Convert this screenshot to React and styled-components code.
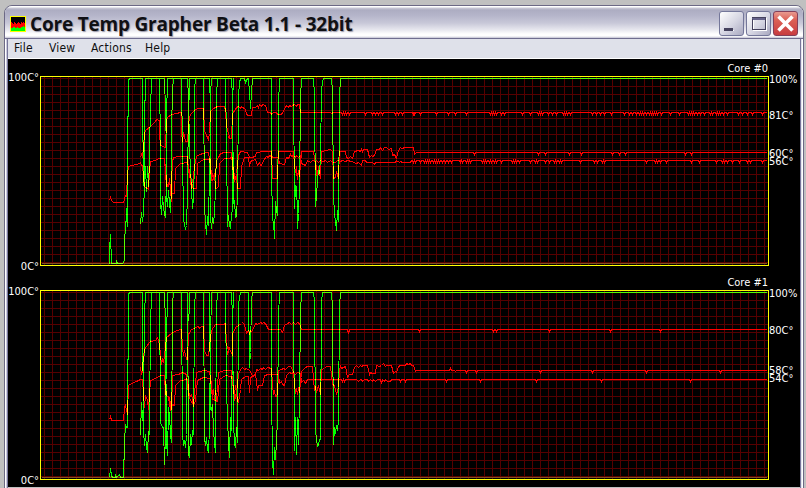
import React from 'react';
import styled, { createGlobalStyle } from 'styled-components';

const PLOT_WIDTH = 729;
const PLOT_HEIGHT = 190;

// Traces are stored in blocks of thirds of a pixel: [block offset, 'x,y x,y ...']
const toPath = (blocks) => {
	const points = blocks.flatMap(([offset, samples]) =>
		samples
			.trim()
			.split(/\s+/)
			.map((pair) => {
				const [x, y] = pair.split(',').map(Number);
				return `${60.5 + Math.floor((x + offset) / 3)} ${Math.floor(y / 3) - 5.5}`;
			})
	);
	return `M${points.join('L')}`;
};

// A steady reading at `level` with one-sample spikes
const steady = (level, from, to, dips, size = 6) => {
	const spikes = dips.map(
		(x) => `${x - 3},${level} ${x},${level + size} ${x + 3},${level}`
	);
	return `${from},${level} ${spikes.join(' ')} ${to},${level}`;
};

const CORES = [
	{
		name: 'Core #0',
		temps: [
			{ label: '81C°', at: 40 },
			{ label: '60C°', at: 78 },
			{ label: '56C°', at: 86 },
		],
		load: [
			[
				[0, '28,579 28,538 31,492 34,579 48,579 49,570 52,579 66,579 73,570 74,492 77,490 78,415 80,440 82,470 83,252 85,30 88,25 127,25 128,75 130,345 133,320 136,290 139,365 142,288 145,350 148,270 151,75 154,68 154,25 193,25 195,120 198,240 200,380 203,410 205,362 208,400 211,428 214,350 215,180 217,60 219,25 262,25 264,80 267,240 271,290 274,355 277,415 280,385 282,270 284,60 287,25 328,25 330,110 332,440 334,475 337,443 340,460 343,430 346,355 348,240 350,80 353,25'],
				[360, '34,25 38,80 40,400 43,390 46,443 49,440 52,375 54,80 57,38 60,25 72,25 75,38 78,30 81,25 84,25 87,70 89,62 91,115 93,65 96,25 153,25 155,300 157,450 160,455 163,505 166,395 169,420 172,435 175,110 178,25 220,25 222,415 226,345 228,350 231,430 233,475 236,430 238,350 242,85 244,25 280,25 283,75 286,410 289,375 292,330 296,300 298,310 301,260 303,60 307,35 310,25 334,25 338,60 341,380 344,430 347,455 349,480 352,420 355,455 358,80 361,25'],
				[1080, '0,25 918,25'],
			],
			[
				[0, '121,462 124,428 127,455 130,430 132,340 133,95 136,88 136,25 178,25 180,230 181,400 184,432 187,380 190,410 193,432 196,443 198,320 200,110 203,60 203,25 244,25 246,240 250,445 253,465 256,475 260,465 262,370 265,100 268,80 268,25 310,25 313,410 316,460 319,493 322,440 325,465 328,300 330,230 332,70 334,25 376,25 378,220 382,470'],
				[360, '25,435 28,465 31,475 34,430 37,420 38,100 40,25'],
			],
		],
		heat: [
			[
				[0, '121,262 124,253 127,262 131,230 133,190 137,182 150,168 165,153 170,148 177,150 179,190 182,226 190,228 193,232 196,232 198,150 203,142 215,133 230,130 240,127 243,127 245,185 247,213 250,187 253,195 257,213 262,214 265,170 268,138 275,130 285,118 295,114 310,116 313,180 318,195 325,208 329,190 332,125 340,116 352,109 372,109 377,120 380,170 384,190 388,200'],
				[360, '25,200 27,205 33,205 38,130 45,118 50,112 55,108 60,115 65,108 75,118 78,133 85,135 94,135 98,112 105,112 111,106 114,111 118,103 124,108 128,103 135,105 142,128 150,128 155,133 160,128 168,128 172,133 185,133 195,112 200,107 204,112 209,106 213,110 218,106 222,103 228,109 233,103 238,104 242,127 330,127 334,131 340,127'],
				[720, steady(127, 0, 360, [6, 14, 19, 29, 77, 97, 105, 114, 126, 165, 175, 187, 219, 224, 240, 290, 325, 345])],
				[1080, steady(127, 0, 918, [18, 90, 97, 103, 109, 124, 132, 188, 212, 235, 241, 248, 264, 277, 290, 310, 317, 323, 330, 398, 408, 421, 434, 455, 492, 508, 516, 530, 537, 543, 550, 560, 567, 573, 579, 585, 592, 605, 630, 658, 685, 692, 698, 704, 712, 722, 732, 752, 758, 768, 775, 782, 790, 802, 835, 848, 862, 876, 907])],
			],
			[
				[0, '193,265 198,350 206,345 209,325 213,395 215,330 217,275 219,262 235,258 250,258 262,260 266,300 270,330 274,355 278,340 282,290 288,260 298,252 310,250 318,247 326,248 330,290 334,330 337,310 340,328 345,318 348,270 355,262 360,250 372,247 388,247'],
				[360, '28,247 35,247 38,270 41,325 44,310 47,328 50,310 54,255 62,245 83,247 88,262 95,262 105,260 110,247 130,243 153,243 157,325 172,325 176,245 220,243 224,290 228,315 230,290 232,328 235,300 238,320 243,245 280,243 285,280 288,316 290,285 293,312 296,290 301,325 304,245 332,238 336,245 340,325 346,322 350,305 355,325 357,245 360,244'],
				[720, '0,244 16,244 20,262 25,265 30,260 37,265 42,245 55,240 60,243 64,238 68,243 71,238 83,238 88,262 95,255 98,259 104,255 110,238 118,238 122,232 128,240 133,233 140,233 146,237 153,234 158,255 162,252 168,264 170,262 174,240 180,233 185,236 195,232 220,232 224,252 230,247'],
				[1080, steady(247, 0, 918, [42, 235, 255, 327, 363, 458, 478, 495, 675, 693])],
			],
			[
				[0, '28,392 31,382 34,392 40,397 70,397 75,377 80,378 83,310 85,290 95,285 112,282 120,278 124,285 128,285 130,320 134,350 145,358 149,300 152,275 165,270 176,265 193,265 198,330 202,350 206,350 209,325 212,360 214,370 222,370 225,295 240,280 262,278 268,300 273,345 280,355 289,355 292,280 310,268 330,268 333,330 337,330 342,310 346,355 354,353 358,280 372,265 390,265'],
				[360, '35,260 40,300 44,330 50,320 53,355 60,355 64,290 72,262 85,262 88,290 92,275 98,270 105,268 112,285 118,278 121,287 125,285 130,270 140,258 145,262 149,256 153,258 160,262 175,262 178,280 192,282 200,262 206,266 210,253 215,260 220,255 225,261 230,256 235,261 240,257 244,280 257,285 262,272 270,278 278,270 285,275 290,270 295,277 300,272 310,275 316,270 323,277 330,270 338,276 345,278 353,270 360,275'],
				[720, '0,275 6,272 16,275 22,272 35,275 50,280 55,278 60,284 64,286 66,272 70,272 76,272 80,277 98,277 102,282 105,277 165,277 170,272 177,277 182,273 186,277 212,277'],
				[720, steady(271, 215, 360, [219, 225, 240, 252, 258, 264, 270, 281, 287, 293, 299, 306, 315, 326, 334])],
				[1080, steady(271, 0, 918, [2, 7, 20, 26, 32, 66, 72, 80, 88, 94, 102, 110, 125, 157, 163, 170, 177, 210, 225, 233, 256, 267, 282, 290, 297, 305, 360, 402, 412, 427, 433, 560, 585, 592, 600, 620, 695, 717, 770, 787, 793, 802, 817, 837, 862, 870, 907])],
			],
		],
	},
	{
		name: 'Core #1',
		temps: [
			{ label: '80C°', at: 41 },
			{ label: '58C°', at: 81 },
			{ label: '54C°', at: 89 },
		],
		load: [
			[
				[0, '28,579 31,553 34,575 37,579 45,579 47,570 50,579 57,570 60,579 70,579 73,475 76,420 79,430 82,430 82,225 85,225 85,30 88,25 127,25 128,75 130,440 133,485 136,450 139,490 142,505 145,445 148,450 150,80 154,70 154,25 193,25 195,115 198,475 201,515 204,370 207,395 211,450 214,475 216,60 219,25 262,25 265,510 267,520 270,450 274,480 277,440 280,450 283,65 287,25 328,25 331,375 334,380 337,360 340,440 343,475 346,505 349,70 353,25'],
				[360, '34,25 38,100 40,410 43,480 46,488 49,430 52,475 55,60 60,25 84,25 87,250 89,245 91,205 94,50 96,25 153,25 155,310 157,530 160,572 163,490 166,525 169,470 172,410 175,100 178,25 220,25 223,500 226,400 230,510 233,400 236,480 239,330 242,85 244,25 280,25 283,50 286,440 289,465 292,488 295,485 298,465 301,465 303,55 308,25 334,25 338,70 341,480 344,430 347,448 350,425 353,440 355,410 358,65 361,25'],
				[1080, '0,25 918,25'],
			],
			[
				[0, '121,452 124,355 127,410 130,350 133,90 136,25 178,25 180,390 182,415 187,430 190,430 193,540 196,450 199,130 203,70 203,25 244,25 247,450 250,485 253,470 257,490 260,450 262,120 268,80 268,25 310,25 313,460 316,485 319,460 322,495 325,505 328,430 331,170 334,25 376,25 379,320 385,480 388,520'],
				[360, '28,520 31,400 34,440 37,120 40,25'],
			],
		],
		heat: [
			[
				[0, '121,250 125,270 128,260 131,210 137,190 150,172 165,168 173,160 178,180 181,215 184,240 187,225 190,235 193,215 197,190 200,160 215,148 230,138 243,136 247,190 250,215 253,198 258,225 262,225 265,150 275,135 295,128 299,132 303,127 310,128 313,200 318,213 326,213 330,160 335,140 345,122 370,120 376,117 380,180 384,200 388,190'],
				[360, '22,210 26,190 30,200 36,215 38,150 45,130 55,124 65,119 68,115 73,122 78,147 84,140 87,148 90,140 95,142 100,132 107,118 113,121 120,115 127,119 131,115 135,119 144,136 182,136 188,145 194,125 203,118 208,115 213,121 220,116 226,121 231,116 238,118 243,136 360,136'],
				[720, '0,136 22,136 25,148 29,136 235,136 238,142 240,136 360,136'],
				[1080, steady(136, 0, 918, [100, 108, 267, 450, 600])],
			],
			[
				[0, '193,275 198,335 208,340 214,375 217,275 235,272 248,265 258,270 265,330 270,350 280,360 288,265 310,260 327,262 333,300 336,330 339,315 342,345 345,320 350,345 356,265 372,260 390,260'],
				[360, '35,260 39,320 42,330 45,305 48,325 54,270 62,255 68,251 74,256 80,252 87,260 98,275 105,270 108,255 114,258 120,253 126,257 130,250 135,256 142,251 153,253 156,300 159,330 162,322 165,337 172,335 176,260 184,257 190,252 197,256 204,248 212,247 220,262 224,300 227,328 230,312 232,330 235,310 238,325 243,262 250,257 256,250 262,248 278,248 284,320 287,310 290,325 294,305 301,330 304,255 312,253 318,247 332,247 338,300 344,305 350,330 356,310 358,255 360,248'],
				[720, '0,248 5,252 16,247 22,280 28,270 36,270 42,250 50,245 55,250 60,244 65,248 70,244 83,244 88,272 92,264 98,268 106,268 110,245 118,246 125,244 130,238 135,246 139,243 153,244 156,255 160,268 165,262 170,265 174,247 180,244 195,244 200,238 205,241 210,238 214,244 220,244 225,262 230,259 328,259 331,253 334,259 342,259 345,263 348,259 360,259'],
				[1080, steady(259, 0, 918, [18, 50, 240, 398, 560, 780])],
			],
			[
				[0, '28,405 31,397 34,410 70,410 74,370 77,365 82,390 85,305 95,298 110,292 122,287 128,287 132,370 136,335 142,350 146,375 150,290 165,283 180,275 193,275 197,330 206,340 212,375 216,360 223,365 227,305 240,290 262,287 267,340 275,330 280,365 286,350 292,290 310,280 330,283 336,345 345,350 352,352 357,285 375,275 390,277'],
				[360, '35,275 40,310 44,348 48,325 52,352 56,355 60,315 65,285 75,278 85,278 88,325 92,280 98,277 105,275 108,288 112,318 116,303 126,303 133,275 145,270 175,270 178,298 183,292 188,302 194,303 200,275 207,265 215,269 220,265 226,271 233,265 240,268 244,295 250,290 257,297 262,286 360,287'],
				[720, '0,287 4,287 7,292 10,287 14,292 17,287 50,287 54,292 60,287 65,287 68,292 72,287 82,287 86,293 90,287 96,293 100,287 106,292 111,287 120,287 123,298 128,287 132,292 135,287 142,292 150,292 155,287 177,287 180,292 184,287 192,287 195,292 200,287 315,287 318,292 321,287'],
				[1080, steady(286, 0, 918, [62, 228, 425, 690])],
			],
		],
	},
];

const GlobalStyle = createGlobalStyle`
	body {
		margin: 0;
		overflow: hidden;
		background: #c0c0c0;
	}
`;

const Desktop = styled.div`
	box-sizing: border-box;
	width: 806px;
	height: 488px;
	padding: 5px 2px 0 4px;
	overflow: hidden;
	background: #c0c0c0;
	font-family: 'DejaVu Sans Condensed', 'DejaVu Sans', sans-serif;
	font-stretch: condensed;
	font-size: 11px;
`;

const Window = styled.div`
	box-sizing: border-box;
	height: 500px;
	padding: 0 3px;
	border: 1px solid #6c6985;
	border-radius: 8px 8px 0 0;
	background: linear-gradient(90deg, #fff 1px, #c9c9dc 1px, #c9c9dc 2px, #77769a 2px, #77769a 3px, transparent 3px, transparent 795px, #77769a 795px, #77769a 796px, #c9c9dc 796px, #fff 797px);
	overflow: hidden;
`;

const TitleBar = styled.div`
	display: flex;
	align-items: center;
	box-sizing: border-box;
	height: 33px;
	margin: 0 -3px;
	padding: 0 5px;
	border-bottom: 1px solid #706e90;
	background: linear-gradient(
		#fff 0,
		#fff 1px,
		#c8c8d6 2px,
		#adadc2 4px,
		#b4b4c9 9px,
		#c8c8d8 17px,
		#e8e8ef 24px,
		#fff 28px,
		#fff 30px,
		#c0c0d2 32px
	);
`;

const Title = styled.h1`
	flex: 1;
	margin: 4px 0 0 4px;
	color: #101014;
	font-family: 'Open Sans', 'Noto Sans', sans-serif;
	font-stretch: normal;
	font-size: 19px;
	font-weight: 700;
	line-height: 24px;
	letter-spacing: -0.2px;
	white-space: nowrap;
	text-shadow: 1px 1px 1px #9898aa;
`;

const Buttons = styled.div`
	display: flex;
	gap: 2px;
	margin-top: 2px;
`;

const WindowButton = styled.button`
	box-sizing: border-box;
	width: 25px;
	height: 25px;
	padding: 0;
	border: 1px solid ${(props) => (props.$close ? '#84405a' : '#74779a')};
	border-radius: 3px;
	background: ${(props) =>
		props.$close
			? 'linear-gradient(#e89a90, #dc6055 35%, #c83c40)'
			: 'linear-gradient(135deg, #fff, #d5d5e2 55%, #a9a9c0)'};

	svg {
		display: block;
	}
`;

const MenuBar = styled.nav`
	display: flex;
	gap: 14px;
	box-sizing: border-box;
	height: 20px;
	padding: 0 6px;
	border-bottom: 1px solid #fff;
	background: #dfe1ea;
	color: #101010;
	font-size: 12px;
	letter-spacing: 0.2px;
	line-height: 19px;
`;

const MenuItem = styled.span`
	width: ${(props) => props.$width}px;
	white-space: nowrap;
`;

const Client = styled.main`
	background: #000;
	color: #fff;
`;

const CorePanel = styled.section`
	display: grid;
	grid-template-columns: 32px ${PLOT_WIDTH}px 1fr;
	grid-template-rows: 17px ${PLOT_HEIGHT}px;
	height: 214px;
`;

const CoreName = styled.h2`
	grid-column: 2;
	margin: 0;
	padding: 3px 1px 0 0;
	font-size: 11px;
	font-weight: 400;
	line-height: 13px;
	text-align: right;
`;

const Axis = styled.div`
	grid-column: 1;
	display: flex;
	flex-direction: column;
	justify-content: space-between;
	align-items: flex-end;
	margin: -5px 1px -8px 0;
	line-height: 14px;
	white-space: nowrap;
`;

const Readings = styled.div`
	position: relative;
	line-height: 14px;
	white-space: nowrap;
`;

const Reading = styled.span`
	position: absolute;
	left: 0;
	top: ${(props) => props.$at - 7}px;
`;

const Plot = styled.svg`
	display: block;
	isolation: isolate;
	shape-rendering: crispEdges;
	fill: none;
`;

// Load is added on top of the heat traces, so crossings turn yellow
const Trace = styled.path`
	stroke: ${(props) => (props.$load ? '#00ff00' : '#ff0000')};
	mix-blend-mode: ${(props) => (props.$load ? 'lighten' : 'normal')};
`;

const Icon = styled.svg`
	flex: none;
	margin-top: 3px;
	shape-rendering: crispEdges;
`;

function AppIcon() {
	return (
		<Icon width="16" height="16">
			<path fill="#ffff00" d="M0 0h16v16H0z" />
			<path fill="#000" d="M1 1h14v14H1z" />
			<path fill="#ff0000" d="M1 6h1v1h1v1h1V6h1v1h1v1h1V7h1V6h1v1h1v1h1V6h1v1h1V6h1v1h1v5H1z" />
			<path fill="#00ff00" d="M1 12h2v-1h2v1h2v-1h1v1h3v-1h2v-1h1v1h1v4H1z" />
		</Icon>
	);
}

function Grid() {
	let d = '';
	for (let x = 4; x < PLOT_WIDTH - 1; x += 8) d += `M${x + 0.5} 1V189`;
	for (let y = 2; y < PLOT_HEIGHT - 1; y += 8) d += `M1 ${y + 0.5}H728`;
	return <path d={d} stroke="#560000" />;
}

function Core({ core }) {
	return (
		<CorePanel>
			<CoreName>{core.name}</CoreName>
			<Axis>
				<span>100C°</span>
				<span>0C°</span>
			</Axis>
			<Plot width={PLOT_WIDTH} height={PLOT_HEIGHT}>
				<Grid />
				<path d="M2 187.5H727" stroke="#805020" />
				{core.heat.map((trace, i) => (
					<Trace key={i} d={toPath(trace)} />
				))}
				{core.load.map((trace, i) => (
					<Trace key={i} $load d={toPath(trace)} />
				))}
				<rect x="0.5" y="0.5" width="728" height="189" stroke="#ffff00" />
			</Plot>
			<Readings>
				<Reading $at={4}>100%</Reading>
				{core.temps.map((temp) => (
					<Reading key={temp.label} $at={temp.at}>
						{temp.label}
					</Reading>
				))}
			</Readings>
		</CorePanel>
	);
}

function App() {
	return (
		<Desktop>
			<GlobalStyle />
			<Window>
				<TitleBar>
					<AppIcon />
					<Title>Core Temp Grapher Beta 1.1 - 32bit</Title>
					<Buttons>
						<WindowButton aria-label="Minimize">
							<svg width="23" height="23" shapeRendering="crispEdges">
								<path fill="#fff" d="M5 18h9v1H5z" />
								<path fill="#45425e" d="M4 16h9v3H4z" />
							</svg>
						</WindowButton>
						<WindowButton aria-label="Maximize">
							<svg width="23" height="23" fill="none" shapeRendering="crispEdges">
								<path stroke="#fff" d="M6.5 6.5h13v12h-13z" />
								<path stroke="#45425e" d="M5.5 5.5h13v12h-13z" />
								<path stroke="#66638a" d="M5 6.5h13M6 7.5h12" />
							</svg>
						</WindowButton>
						<WindowButton $close aria-label="Close">
							<svg width="23" height="23" fill="none">
								<path stroke="#fff" strokeWidth="3.6" d="M4.5 4.5l14 14M18.5 4.5l-14 14" />
							</svg>
						</WindowButton>
					</Buttons>
				</TitleBar>
				<MenuBar>
					<MenuItem $width={21}>File</MenuItem>
					<MenuItem $width={28}>View</MenuItem>
					<MenuItem $width={40}>Actions</MenuItem>
					<MenuItem $width={26}>Help</MenuItem>
				</MenuBar>
				<Client>
					{CORES.map((core) => (
						<Core key={core.name} core={core} />
					))}
				</Client>
			</Window>
		</Desktop>
	);
}

export default App;
